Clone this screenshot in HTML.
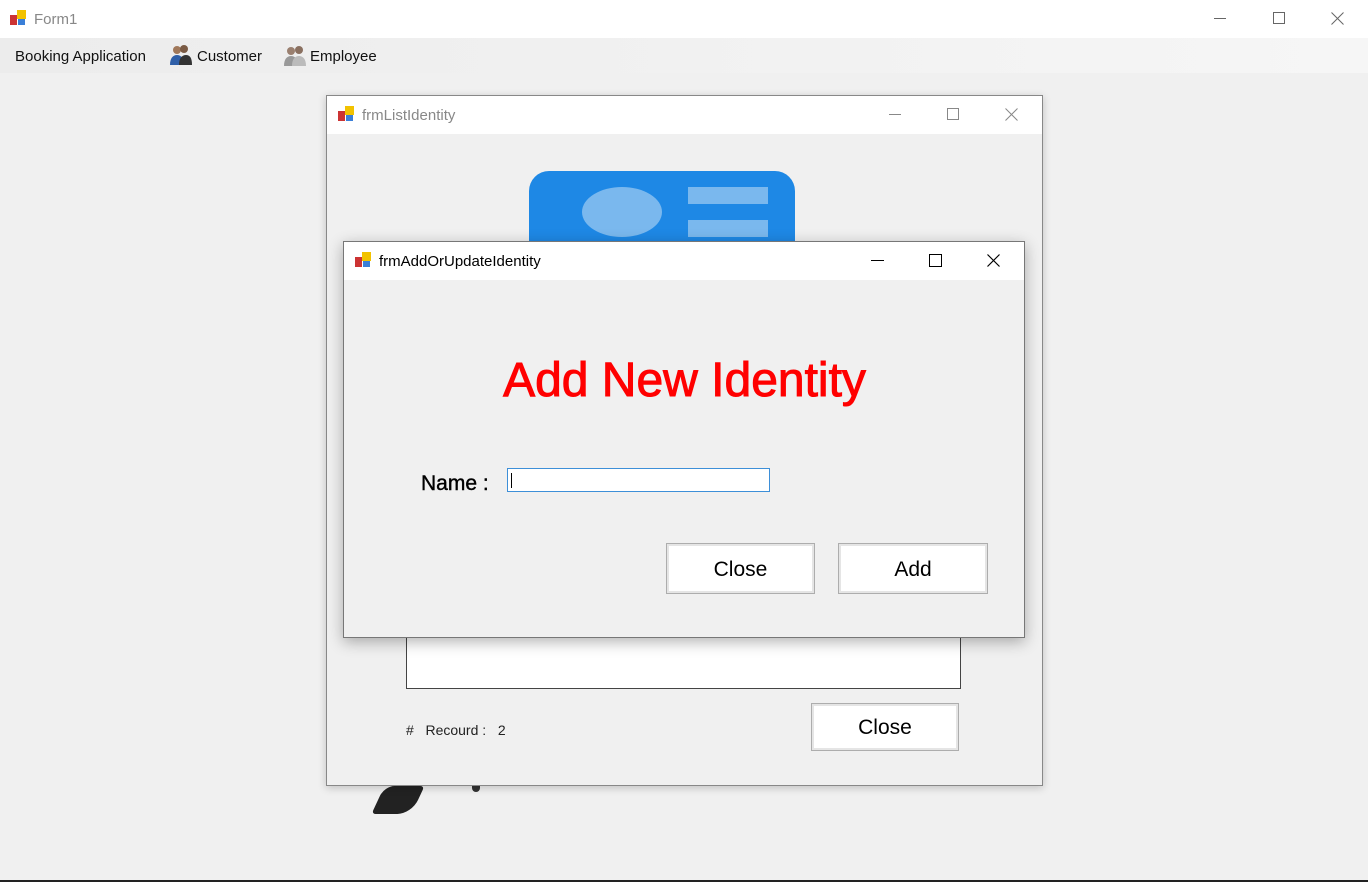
<!DOCTYPE html>
<html><head><style>
*{margin:0;padding:0;box-sizing:border-box}
body{width:1368px;height:882px;background:#f0f0f0;position:relative;overflow:hidden;font-family:"Liberation Sans",sans-serif}
.a{position:absolute}
.ico{position:absolute;width:16px;height:16px}
.btn{position:absolute;background:#fff;border:1px solid #adadad;box-shadow:inset 0 0 0 2px #e5e5e5;text-align:center;color:#000;font-size:21px}
.ctl{position:absolute;color:#222;font-size:14px}
</style></head><body>
<div class="a" style="left:0;top:0;width:1368px;height:38px;background:#fff"></div>
<svg class="ico" style="left:10px;top:10px" viewBox="0 0 16 16"><rect x="0" y="5" width="7" height="10" fill="#c33"/><rect x="7" y="0" width="9" height="9" fill="#f2c200"/><rect x="8" y="9" width="7" height="6" fill="#3a7fd8"/></svg>
<div class="a" style="left:34px;top:11px;font-size:15px;color:#888">Form1</div>
<div class="a" style="left:1214px;top:18px;width:12px;height:1px;background:#666"></div>
<div class="a" style="left:1273px;top:12px;width:12px;height:12px;border:1px solid #666"></div>
<svg class="a" style="left:1331px;top:12px" width="13" height="13"><path d="M0.5 0.5L12.5 12.5M12.5 0.5L0.5 12.5" stroke="#666" stroke-width="1"/></svg>
<div class="a" style="left:0;top:38px;width:1368px;height:35px;background:linear-gradient(90deg,#ececec,#f6f6f6)"></div>
<div class="a" style="left:15px;top:48px;font-size:15px;color:#111">Booking Application</div>
<svg class="a" style="left:169px;top:43px" width="24" height="24" viewBox="0 0 24 24"><circle cx="8" cy="7" r="4" fill="#a0785a"/><circle cx="15" cy="6" r="4" fill="#7a5a44"/><path d="M1 22c0-7 3-10 7-10s7 3 7 10z" fill="#2f5fa8"/><path d="M10 22c0-7 3-10 7-10s6 3 6 10z" fill="#333"/></svg>
<div class="a" style="left:197px;top:48px;font-size:15px;color:#111">Customer</div>
<svg class="a" style="left:283px;top:43px" width="24" height="24" viewBox="0 0 24 24"><circle cx="8" cy="8" r="4" fill="#9a8070"/><circle cx="16" cy="7" r="4" fill="#8a7060"/><path d="M1 23c0-7 3-10 7-10s7 3 7 10z" fill="#999"/><path d="M9 23c0-7 3-10 7-10s7 3 7 10z" fill="#bbb"/></svg>
<div class="a" style="left:310px;top:48px;font-size:15px;color:#111">Employee</div>
<div class="a" style="left:0;top:880px;width:1368px;height:2px;background:#222"></div>

<div class="a" style="left:378px;top:786px;width:40px;height:28px;background:#222;border-radius:10px 4px 14px 4px;transform:skewX(-25deg)"></div>
<div class="a" style="left:472px;top:782px;width:8px;height:10px;background:#333;border-radius:4px"></div>

<div class="a" style="left:326px;top:95px;width:717px;height:691px;background:#f0f0f0;border:1px solid #888;box-shadow:0 2px 8px rgba(0,0,0,.2)"></div>
<div class="a" style="left:327px;top:96px;width:715px;height:38px;background:#fff"></div>
<svg class="ico" style="left:338px;top:106px" viewBox="0 0 16 16"><rect x="0" y="5" width="7" height="10" fill="#c33"/><rect x="7" y="0" width="9" height="9" fill="#f2c200"/><rect x="8" y="9" width="7" height="6" fill="#3a7fd8"/></svg>
<div class="a" style="left:362px;top:107px;font-size:15px;color:#888">frmListIdentity</div>
<div class="a" style="left:889px;top:114px;width:12px;height:1px;background:#888"></div>
<div class="a" style="left:947px;top:108px;width:12px;height:12px;border:1px solid #888"></div>
<svg class="a" style="left:1005px;top:108px" width="13" height="13"><path d="M0.5 0.5L12.5 12.5M12.5 0.5L0.5 12.5" stroke="#888" stroke-width="1"/></svg>
<div class="a" style="left:529px;top:171px;width:266px;height:120px;background:#1e88e5;border-radius:20px"></div>
<div class="a" style="left:582px;top:187px;width:80px;height:50px;background:#7ab8ee;border-radius:50%"></div>
<div class="a" style="left:688px;top:187px;width:80px;height:17px;background:#7ab8ee"></div>
<div class="a" style="left:688px;top:220px;width:80px;height:17px;background:#7ab8ee"></div>
<div class="a" style="left:406px;top:600px;width:555px;height:89px;background:#fff;border:1px solid #444"></div>
<div class="ctl" style="left:406px;top:722px">#&nbsp;&nbsp; Recourd :&nbsp;&nbsp; 2</div>
<div class="btn" style="left:811px;top:703px;width:148px;height:48px;line-height:47px">Close</div>

<div class="a" style="left:343px;top:241px;width:682px;height:397px;background:#f0f0f0;border:1px solid #777;box-shadow:0 4px 14px rgba(0,0,0,.3)"></div>
<div class="a" style="left:344px;top:242px;width:680px;height:38px;background:#fff"></div>
<svg class="ico" style="left:355px;top:252px" viewBox="0 0 16 16"><rect x="0" y="5" width="7" height="10" fill="#c33"/><rect x="7" y="0" width="9" height="9" fill="#f2c200"/><rect x="8" y="9" width="7" height="6" fill="#3a7fd8"/></svg>
<div class="a" style="left:379px;top:253px;font-size:15px;color:#000">frmAddOrUpdateIdentity</div>
<div class="a" style="left:871px;top:260px;width:13px;height:1px;background:#000"></div>
<div class="a" style="left:929px;top:254px;width:13px;height:13px;border:1px solid #000"></div>
<svg class="a" style="left:987px;top:254px" width="13" height="13"><path d="M0.5 0.5L12.5 12.5M12.5 0.5L0.5 12.5" stroke="#000" stroke-width="1.2"/></svg>
<div class="a" style="left:344px;top:353px;width:680px;text-align:center;color:#ff0000;font-size:48px;-webkit-text-stroke:1px #ff0000;padding-left:1px">Add New Identity</div>
<div class="a" style="left:421px;top:472px;font-size:21px;color:#000;-webkit-text-stroke:0.4px #000">Name :</div>
<div class="a" style="left:507px;top:468px;width:263px;height:24px;background:#fff;border:1px solid #3d8fd8"></div>
<div class="a" style="left:511px;top:473px;width:1px;height:15px;background:#000"></div>
<div class="btn" style="left:666px;top:543px;width:149px;height:51px;line-height:51px">Close</div>
<div class="btn" style="left:838px;top:543px;width:150px;height:51px;line-height:51px">Add</div>
</body></html>
